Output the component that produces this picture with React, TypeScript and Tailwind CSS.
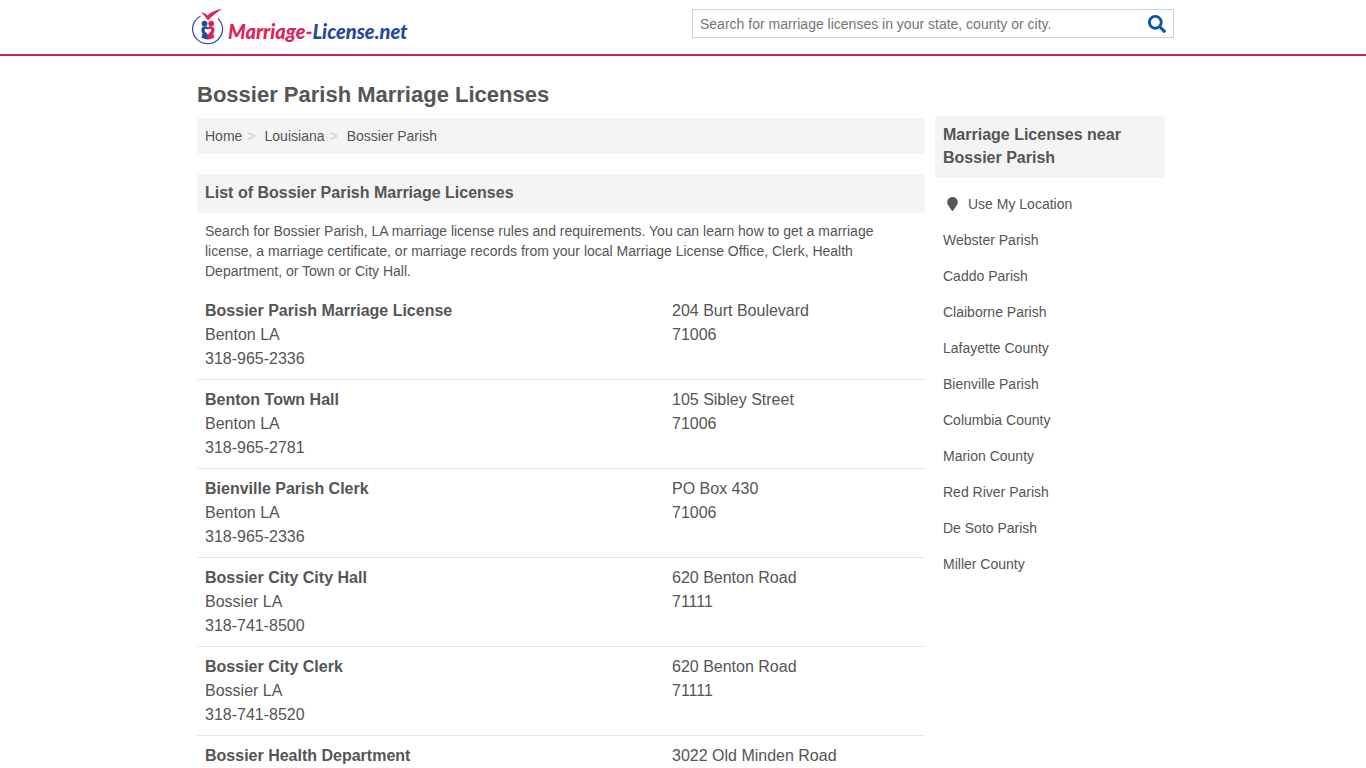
import { FaMapMarker, FaSearch } from "react-icons/fa";

type Office = { name: string; city?: string; phone?: string; street: string; zip?: string };

const offices: Office[] = [
  { name: "Bossier Parish Marriage License", city: "Benton LA", phone: "318-965-2336", street: "204 Burt Boulevard", zip: "71006" },
  { name: "Benton Town Hall", city: "Benton LA", phone: "318-965-2781", street: "105 Sibley Street", zip: "71006" },
  { name: "Bienville Parish Clerk", city: "Benton LA", phone: "318-965-2336", street: "PO Box 430", zip: "71006" },
  { name: "Bossier City City Hall", city: "Bossier LA", phone: "318-741-8500", street: "620 Benton Road", zip: "71111" },
  { name: "Bossier City Clerk", city: "Bossier LA", phone: "318-741-8520", street: "620 Benton Road", zip: "71111" },
  { name: "Bossier Health Department", street: "3022 Old Minden Road" },
];

const nearby = [
  "Webster Parish",
  "Caddo Parish",
  "Claiborne Parish",
  "Lafayette County",
  "Bienville Parish",
  "Columbia County",
  "Marion County",
  "Red River Parish",
  "De Soto Parish",
  "Miller County",
];

function LogoMark() {
  return (
    <svg width="32" height="36" viewBox="0 0 32 36" fill="none" aria-hidden="true">
      <path d="M8.500 7A14.600 14.600 0 0 0 13 34.400A14.600 14.600 0 0 0 26 9.500" stroke="#3a58a8" strokeWidth="1.300" />
      <path d="M9 3.600C11.500 3.400 13.600 4.600 15.400 6.400C19 3 24 .8 30.200 0C25 3.200 20 7 16 11.600C14 8.800 11.800 6 9 3.600Z" fill="#dc2459" />
      <circle cx="12.600" cy="14.600" r="2.900" fill="#24489c" />
      <circle cx="19.200" cy="14.600" r="2.900" fill="#dc2459" />
      <path d="M15.900 18C14 16.800 10.400 16.800 9.600 19.500C9 21.500 9.600 23 10.600 24.400L9.400 28.600C11 29.800 13.500 30.400 15.900 30.400Z" fill="#24489c" />
      <path d="M15.900 18C17.800 16.800 21.400 16.800 22.200 19.500C22.800 21.500 22.200 23 21.200 24.400L22.400 28.600C20.800 29.800 18.300 30.400 15.900 30.400Z" fill="#dc2459" />
      <path d="M15.900 25.600L13 22.500C11.400 20.500 14.100 18.700 15.900 20.800C17.700 18.700 20.400 20.500 18.800 22.500Z" fill="#fff" />
    </svg>
  );
}

function OfficeRow({ office }: { office: Office }) {
  return (
    <li className="grid grid-cols-[467fr_245fr] border-b border-[#e8e8e8] p-2 text-base leading-6">
      <div>
        <a href="#" className="font-bold">{office.name}</a>
        {office.city && <p>{office.city}</p>}
        {office.phone && <p>{office.phone}</p>}
      </div>
      <div>
        <p>{office.street}</p>
        {office.zip && <p>{office.zip}</p>}
      </div>
    </li>
  );
}

export default function App() {
  return (
    <div className="bg-white font-['Liberation_Sans',Arial,sans-serif] text-sm text-[#555]">
      <header className="border-b-2 border-[#c2265f]">
        <div className="mx-auto flex h-[54px] max-w-[982px] items-start justify-between pt-[9px]">
          <a href="#" className="flex items-center gap-1" aria-label="Marriage-License.net">
            <LogoMark />
            <span className="pt-2 font-['Lato',sans-serif] text-xl leading-6 font-black whitespace-nowrap text-[#24489c] italic">
              <span className="text-[#dc2459]">Marriage-</span>License.net
            </span>
          </a>
          <form className="flex h-[29px] w-[482px] items-center border border-[#c5d3dc] px-[7px]" onSubmit={(e) => e.preventDefault()}>
            <input
              type="text"
              aria-label="Search for marriage licenses"
              placeholder="Search for marriage licenses in your state, county or city."
              className="min-w-0 flex-1 text-sm outline-none placeholder:text-[#757575]"
            />
            <button type="submit" aria-label="Search" className="text-lg text-[#0b55a5]">
              <FaSearch />
            </button>
          </form>
        </div>
      </header>

      <div className="mx-auto flex max-w-[982px] items-start gap-[10px] pt-6 pr-[9px] pl-[5px]">
        <main className="min-w-0 flex-1">
          <h1 className="text-[22px] leading-[30px] font-bold">Bossier Parish Marriage Licenses</h1>
          <nav aria-label="Breadcrumb" className="mt-2 rounded-[3px] bg-[#f4f4f4] p-2 leading-5">
            <ol className="flex">
              <li><a href="#">Home</a><span className="pr-[9px] pl-[5px] text-[#ccc]">&gt;</span></li>
              <li><a href="#">Louisiana</a><span className="pr-[9px] pl-[5px] text-[#ccc]">&gt;</span></li>
              <li><a href="#">Bossier Parish</a></li>
            </ol>
          </nav>
          <h2 className="mt-5 rounded-[3px] bg-[#f4f4f4] px-2 pt-[7px] pb-2 text-base leading-6 font-bold">
            List of Bossier Parish Marriage Licenses
          </h2>
          <p className="px-2 pt-2 leading-5">
            Search for Bossier Parish, LA marriage license rules and requirements. You can learn how to get a marriage license, a
            marriage certificate, or marriage records from your local Marriage License Office, Clerk, Health Department, or Town
            or City Hall.
          </p>
          <ul className="mt-[10px]">
            {offices.map((office) => (
              <OfficeRow key={office.name} office={office} />
            ))}
          </ul>
        </main>

        <aside className="mt-9 w-[230px]">
          <h2 className="rounded-[3px] bg-[#f4f4f4] px-2 pt-[7px] pb-[9px] text-base leading-[23px] font-bold">
            Marriage Licenses near Bossier Parish
          </h2>
          <ul className="mt-2 leading-5">
            <li className="p-2">
              <a href="#" className="flex items-center gap-2 pl-[2px]">
                <FaMapMarker className="w-[15px]" />
                Use My Location
              </a>
            </li>
            {nearby.map((place) => (
              <li key={place} className="p-2"><a href="#">{place}</a></li>
            ))}
          </ul>
        </aside>
      </div>
    </div>
  );
}
